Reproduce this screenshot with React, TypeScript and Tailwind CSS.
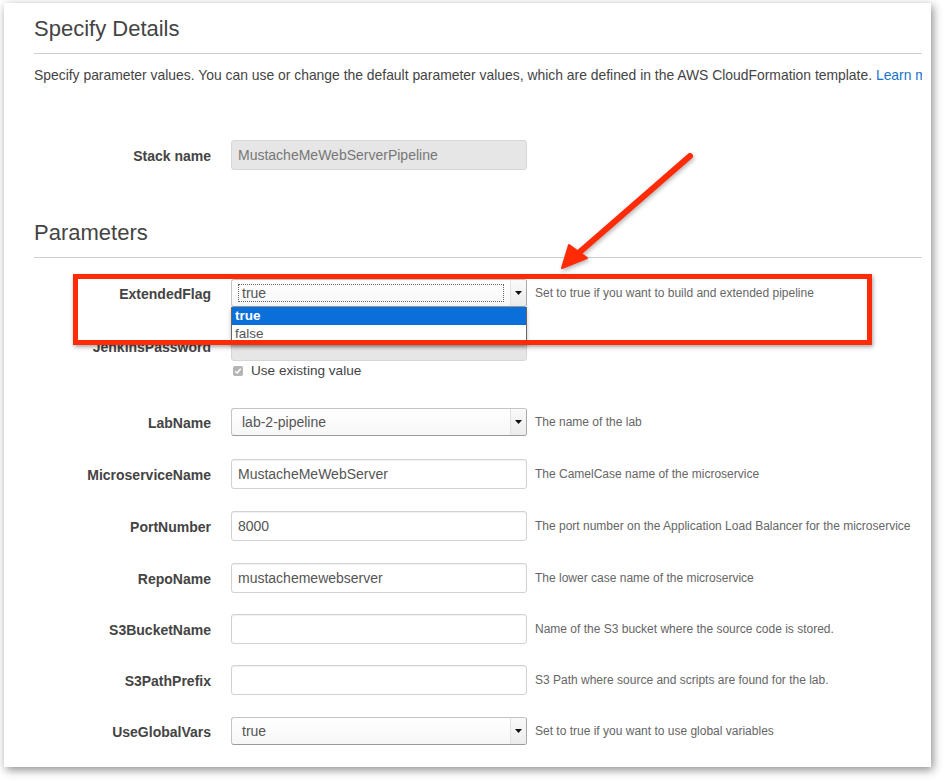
import React from 'react';

const font = { fontFamily: '"Liberation Sans", Arial, sans-serif' };

const Caret: React.FC = () => (
  <svg width="7" height="4" viewBox="0 0 7 4" className="block">
    <path d="M0 0 L7 0 L3.5 4 Z" fill="#111" />
  </svg>
);

interface SelectProps {
  value: string;
  focused?: boolean;
  children?: React.ReactNode;
}

const Select: React.FC<SelectProps> = ({ value, focused, children }) => (
  <div className="relative w-[296px] h-[28px] shrink-0">
    <div className="flex h-full w-full rounded-[3px] border border-[#c4c4c4] border-b-[#9a9a9a] border-r-[#a8a8a8] bg-gradient-to-b from-white to-[#f7f7f7] overflow-hidden">
      <div className="flex-1 flex items-center pl-[6px] pr-[6px]">
        <div
          className={
            focused
              ? 'flex-1 h-[18px] flex items-center pl-[3px] border border-dotted border-[#666] text-[14px] text-[#555]'
              : 'flex-1 flex items-center pl-[4px] text-[14px] text-[#555]'
          }
        >
          {value}
        </div>
      </div>
      <div className="w-[16px] flex items-center justify-center border-l border-[#e2e2e2] bg-gradient-to-b from-[#fafafa] to-[#ececec]">
        <Caret />
      </div>
    </div>
    {children}
  </div>
);

const TextInput: React.FC<{ value?: string; disabled?: boolean }> = ({ value, disabled }) => (
  <div
    className={
      disabled
        ? 'w-[296px] h-[30px] shrink-0 rounded-[3px] border border-[#d6d6d6] bg-[#e6e6e6] flex items-center pl-[6px] text-[14px] text-[#777]'
        : 'w-[296px] h-[30px] shrink-0 rounded-[3px] border border-[#d2d2d2] bg-white shadow-[inset_0_1px_1px_rgba(0,0,0,0.06)] flex items-center pl-[6px] text-[14px] text-[#555]'
    }
  >
    {value}
  </div>
);

interface RowProps {
  label: string;
  help?: string;
  className?: string;
  children: React.ReactNode;
}

const Row: React.FC<RowProps> = ({ label, help, className, children }) => (
  <div className={`flex items-center ${className ?? ''}`}>
    <div className="w-[177px] shrink-0 pt-[2px] text-right text-[14px] font-bold text-[#444]">{label}</div>
    <div className="ml-[20px]">{children}</div>
    {help && <div className="ml-[8px] text-[12px] text-[#666] whitespace-nowrap">{help}</div>}
  </div>
);

export default function App() {
  return (
    <div className="relative w-[944px] h-[781px] bg-white overflow-hidden" style={font}>
      {/* Card */}
      <div className="ml-[4px] mt-[3px] w-[927px] h-[764px] bg-white shadow-[2px_3px_9px_rgba(0,0,0,0.45)]">
        <div className="ml-[30px] w-[888px] h-full overflow-hidden">
          <h1 className="pt-[13px] text-[22px] leading-[26px] text-[#444] font-normal">Specify Details</h1>
          <div className="mt-[11px] h-px bg-[#cfcfcf]" />
          <p className="mt-[12px] text-[13.9px] leading-[18px] text-[#444] whitespace-nowrap">
            Specify parameter values. You can use or change the default parameter values, which are defined in the AWS
            CloudFormation template. <span className="text-[#1a73c9]">Learn more.</span>
          </p>

          <Row label="Stack name" className="mt-[56px]">
            <TextInput value="MustacheMeWebServerPipeline" disabled />
          </Row>

          <h2 className="mt-[50px] text-[22px] leading-[26px] text-[#444] font-normal">Parameters</h2>
          <div className="mt-[11px] h-px bg-[#cfcfcf]" />

          <Row label="ExtendedFlag" help="Set to true if you want to build and extended pipeline" className="mt-[21px] relative z-10">
            <Select value="true" focused>
              {/* open option list */}
              <div className="absolute left-0 top-full w-[296px] bg-white border border-t-0 border-[#666] shadow-[0_2px_4px_rgba(0,0,0,0.25)] text-[13.5px]">
                <div className="h-[18px] flex items-center pl-[3px] bg-[#0b6fd9] text-white font-bold">true</div>
                <div className="h-[18px] flex items-center pl-[3px] text-[#555]">false</div>
              </div>
            </Select>
          </Row>

          <Row label="JenkinsPassword" className="mt-[24px]">
            <TextInput disabled />
          </Row>
          <div className="mt-[2px] ml-[199px] h-[16px] flex items-center gap-[8px]">
            <div className="w-[10px] h-[10px] rounded-[2px] bg-[#b5b5b5] flex items-center justify-center">
              <svg width="8" height="8" viewBox="0 0 8 8">
                <path d="M1.3 4.2 L3.2 6 L6.8 1.8" stroke="#fff" strokeWidth="1.5" fill="none" />
              </svg>
            </div>
            <span className="text-[13.6px] text-[#444]">Use existing value</span>
          </div>

          <Row label="LabName" help="The name of the lab" className="mt-[29px]">
            <Select value="lab-2-pipeline" />
          </Row>
          <Row label="MicroserviceName" help="The CamelCase name of the microservice" className="mt-[23px]">
            <TextInput value="MustacheMeWebServer" />
          </Row>
          <Row label="PortNumber" help="The port number on the Application Load Balancer for the microservice" className="mt-[22px]">
            <TextInput value="8000" />
          </Row>
          <Row label="RepoName" help="The lower case name of the microservice" className="mt-[22px]">
            <TextInput value="mustachemewebserver" />
          </Row>
          <Row label="S3BucketName" help="Name of the S3 bucket where the source code is stored." className="mt-[21px]">
            <TextInput />
          </Row>
          <Row label="S3PathPrefix" help="S3 Path where source and scripts are found for the lab." className="mt-[21px]">
            <TextInput />
          </Row>
          <Row label="UseGlobalVars" help="Set to true if you want to use global variables" className="mt-[22px]">
            <Select value="true" />
          </Row>
        </div>
      </div>

      {/* Annotation: red highlight box */}
      <div className="absolute left-[73px] top-[274px] w-[799px] h-[71px] border-[5px] border-[#ff2a06] shadow-[1px_2px_4px_rgba(0,0,0,0.35)] pointer-events-none z-20" />

      {/* Annotation: arrow */}
      <svg
        className="absolute left-0 top-0 pointer-events-none z-20 drop-shadow-[1px_2px_2px_rgba(0,0,0,0.3)]"
        width="944"
        height="781"
        viewBox="0 0 944 781"
      >
        <line x1="690" y1="156" x2="574" y2="257" stroke="#ff2a06" strokeWidth="6" strokeLinecap="round" />
        <path d="M562 268 L569 245 L587 258 Z" fill="#ff2a06" stroke="#ff2a06" strokeWidth="2" strokeLinejoin="round" />
      </svg>
    </div>
  );
}
